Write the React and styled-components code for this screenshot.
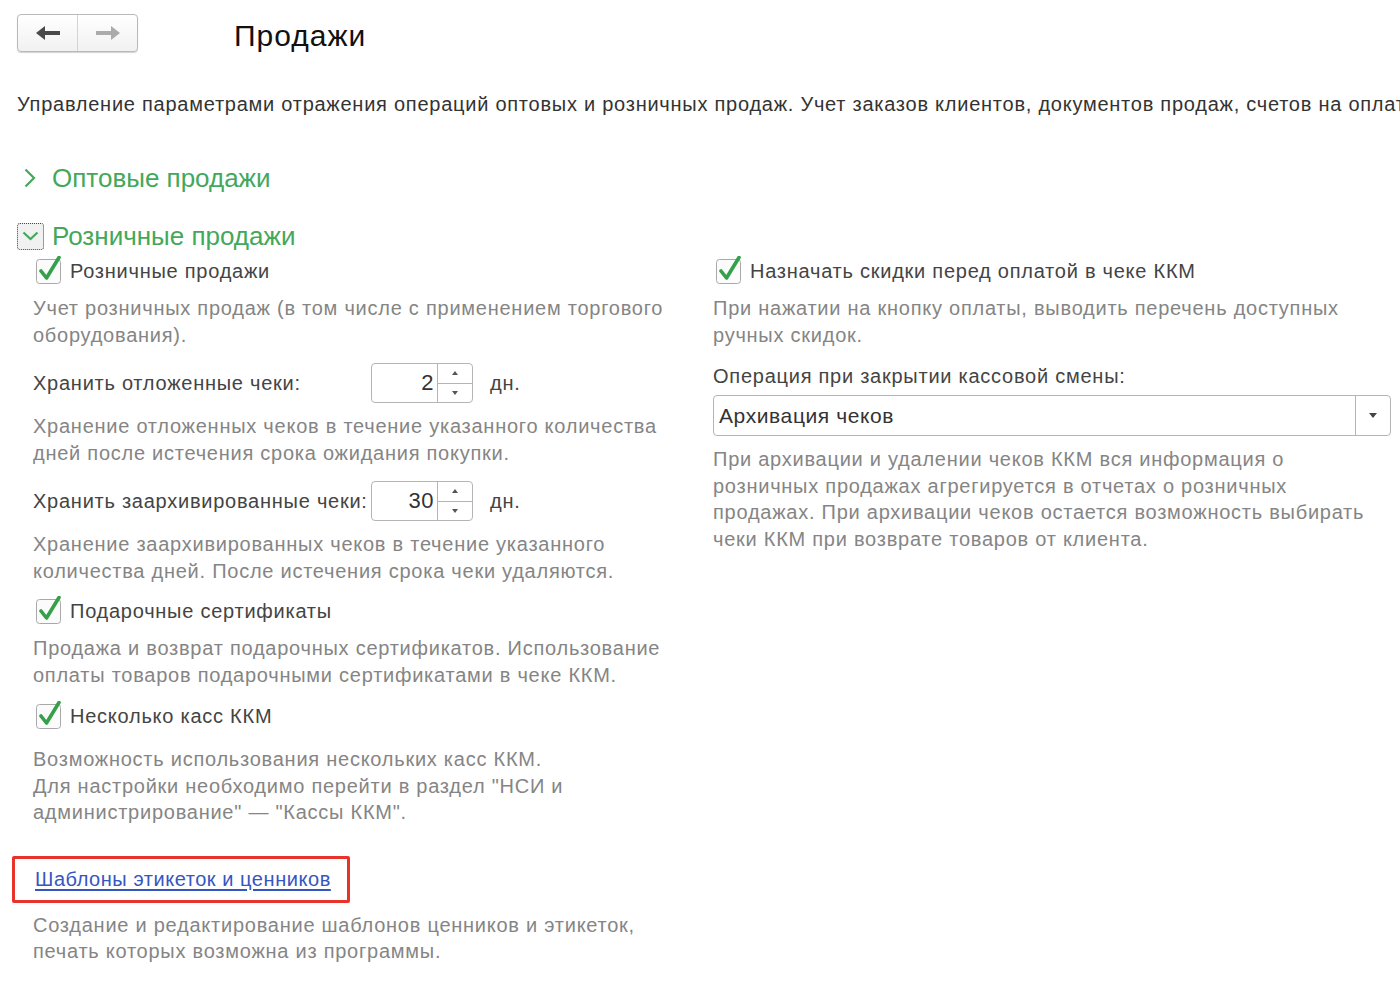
import styled, { createGlobalStyle } from "styled-components";

const Global = createGlobalStyle`
  html, body { margin: 0; padding: 0; background: #fff; }
  body {
    font-family: "Liberation Sans", Arial, sans-serif;
    color: #333;
    overflow: hidden;
  }
`;

const Page = styled.div`
  width: 1400px;
  height: 982px;
  overflow: hidden;
  padding: 14px 0 0 17px;
  box-sizing: border-box;
  letter-spacing: 0.75px;
`;

const Header = styled.div`
  display: flex;
  align-items: flex-start;
`;

const NavGroup = styled.div`
  display: flex;
  width: 121px;
  height: 38px;
  box-sizing: border-box;
  border: 1px solid #b9b9b9;
  border-radius: 4px;
  background: linear-gradient(#ffffff, #f1f1f1);
  box-shadow: 0 1px 1px rgba(0, 0, 0, 0.18);
`;

const NavButton = styled.div`
  flex: 1;
  display: flex;
  align-items: center;
  justify-content: center;
  & + & { border-left: 1px solid #d4d4d4; }
`;

const Title = styled.h1`
  margin: 4px 0 0 96px;
  font-size: 30px;
  line-height: 36px;
  font-weight: normal;
  letter-spacing: 1px;
  color: #111;
`;

const Intro = styled.div`
  margin-top: 37px;
  font-size: 20px;
  line-height: 26px;
  color: #333;
  white-space: nowrap;
`;

const GroupTitle = styled.div`
  display: flex;
  align-items: center;
  gap: ${(p) => p.$gap || 16}px;
  margin-top: ${(p) => p.$top}px;
  padding-left: ${(p) => p.$pad || 0}px;
  font-size: 26px;
  line-height: 32px;
  letter-spacing: 0;
  color: #43a85b;
`;

const CollapseBox = styled.div`
  width: 27px;
  height: 27px;
  box-sizing: border-box;
  border: 1px dotted #444;
  border-radius: 3px;
  background: #f1f1f1;
  display: flex;
  align-items: center;
  justify-content: center;
`;

const Columns = styled.div`
  display: grid;
  grid-template-columns: 680px 678px;
  margin-top: 6px;
  padding-left: 16px;
`;

const Column = styled.div`
  display: flex;
  flex-direction: column;
`;

const CheckRow = styled.div`
  display: flex;
  align-items: center;
  gap: 7px;
  height: 26px;
  margin-top: ${(p) => p.$top || 0}px;
  padding-left: 3px;
  font-size: 20px;
  color: #444;
`;

const Desc = styled.div`
  margin-top: ${(p) => p.$top || 0}px;
  font-size: 20px;
  line-height: 26.5px;
  color: #858585;
  max-width: ${(p) => p.$w || 665}px;
`;

const FieldRow = styled.div`
  display: flex;
  align-items: center;
  height: 40px;
  margin-top: ${(p) => p.$top || 0}px;
  font-size: 20px;
  color: #444;
`;

const FieldLabel = styled.div`
  width: 338px;
`;

const NumberBox = styled.div`
  display: flex;
  width: 102px;
  height: 40px;
  box-sizing: border-box;
  border: 1px solid #b5b5b5;
  border-radius: 4px;
  background: #fff;
`;

const NumberValue = styled.div`
  flex: 1;
  text-align: right;
  padding-right: 3px;
  font-size: 22px;
  line-height: 38px;
  letter-spacing: 0.5px;
  color: #333;
`;

const Spinner = styled.div`
  width: 34px;
  border-left: 1px solid #b5b5b5;
  display: flex;
  flex-direction: column;
`;

const SpinHalf = styled.div`
  flex: 1;
  display: flex;
  align-items: center;
  justify-content: center;
  & + & { border-top: 1px solid #b5b5b5; }
`;

const Unit = styled.span`
  margin-left: 17px;
`;

const Label = styled.div`
  margin-top: ${(p) => p.$top || 0}px;
  font-size: 20px;
  line-height: 26px;
  color: #444;
`;

const Select = styled.div`
  display: flex;
  margin-top: 6px;
  height: 41px;
  box-sizing: border-box;
  border: 1px solid #b5b5b5;
  border-radius: 4px;
  background: #fff;
`;

const SelectValue = styled.div`
  flex: 1;
  padding-left: 5px;
  font-size: 21px;
  line-height: 39px;
  letter-spacing: 0.6px;
  color: #333;
`;

const SelectButton = styled.div`
  width: 34px;
  border-left: 1px solid #b5b5b5;
  display: flex;
  align-items: center;
  justify-content: center;
`;

const LinkFrame = styled.div`
  align-self: flex-start;
  margin: 30px 0 0 -21px;
  width: 338px;
  height: 47px;
  box-sizing: border-box;
  border: 3px solid #e8332a;
  border-radius: 2px;
  padding: 8px 0 0 20px;
`;

const Link = styled.a`
  font-size: 20px;
  line-height: 25px;
  letter-spacing: 0.55px;
  color: #3556c0;
  text-decoration: underline;
  text-underline-offset: 3px;
  cursor: pointer;
`;

const Arrow = ({ dir, color }) => (
  <svg width="24" height="14" viewBox="0 0 24 14">
    <g transform={dir === "right" ? "translate(24 0) scale(-1 1)" : undefined} fill={color}>
      <polygon points="0,7 9,0 9,14" />
      <rect x="8" y="5" width="16" height="4" />
    </g>
  </svg>
);

const Checkbox = () => (
  <svg width="27" height="28" viewBox="0 0 27 28" style={{ marginTop: -2 }}>
    <rect x="0.5" y="3.5" width="24" height="24" rx="3" fill="#fbfbfb" stroke="#a9a9a9" />
    <path d="M5 15 L10.5 22 L23 1.5" fill="none" stroke="#34a04a" strokeWidth="3.6" strokeLinejoin="round" strokeLinecap="round" />
  </svg>
);

const SpinTriangle = ({ up }) => (
  <svg width="6" height="4" viewBox="0 0 6 4">
    <polygon points={up ? "3,0 6,4 0,4" : "0,0 6,0 3,4"} fill="#555" />
  </svg>
);

const NumberField = ({ value }) => (
  <NumberBox>
    <NumberValue>{value}</NumberValue>
    <Spinner>
      <SpinHalf><SpinTriangle up /></SpinHalf>
      <SpinHalf><SpinTriangle /></SpinHalf>
    </Spinner>
  </NumberBox>
);

export default function App() {
  return (
    <Page>
      <Global />
      <Header>
        <NavGroup>
          <NavButton><Arrow dir="left" color="#4a4a4a" /></NavButton>
          <NavButton><Arrow dir="right" color="#ababab" /></NavButton>
        </NavGroup>
        <Title>Продажи</Title>
      </Header>

      <Intro>
        Управление параметрами отражения операций оптовых и розничных продаж. Учет заказов клиентов, документов продаж, счетов на оплату
      </Intro>

      <GroupTitle $top={45} $pad={7} $gap={16}>
        <svg width="12" height="20" viewBox="0 0 12 20">
          <path d="M1.5 1.5 L10 10 L1.5 18.5" fill="none" stroke="#43a85b" strokeWidth="2.2" />
        </svg>
        Оптовые продажи
      </GroupTitle>

      <GroupTitle $top={26} $gap={8}>
        <CollapseBox>
          <svg width="17" height="10" viewBox="0 0 17 10">
            <path d="M1.5 1.5 L8.5 8 L15.5 1.5" fill="none" stroke="#43a85b" strokeWidth="2.2" />
          </svg>
        </CollapseBox>
        Розничные продажи
      </GroupTitle>

      <Columns>
        <Column>
          <CheckRow><Checkbox />Розничные продажи</CheckRow>
          <Desc $top={11}>
            Учет розничных продаж (в том числе с применением торгового оборудования).
          </Desc>

          <FieldRow $top={15}>
            <FieldLabel>Хранить отложенные чеки:</FieldLabel>
            <NumberField value="2" />
            <Unit>дн.</Unit>
          </FieldRow>
          <Desc $top={10}>
            Хранение отложенных чеков в течение указанного количества дней после истечения срока ожидания покупки.
          </Desc>

          <FieldRow $top={15}>
            <FieldLabel>Хранить заархивированные чеки:</FieldLabel>
            <NumberField value="30" />
            <Unit>дн.</Unit>
          </FieldRow>
          <Desc $top={10}>
            Хранение заархивированных чеков в течение указанного количества дней. После истечения срока чеки удаляются.
          </Desc>

          <CheckRow $top={14}><Checkbox />Подарочные сертификаты</CheckRow>
          <Desc $top={11}>
            Продажа и возврат подарочных сертификатов. Использование оплаты товаров подарочными сертификатами в чеке ККМ.
          </Desc>

          <CheckRow $top={15}><Checkbox />Несколько касс ККМ</CheckRow>
          <Desc $top={17}>
            Возможность использования нескольких касс ККМ.
            <br />
            Для настройки необходимо перейти в раздел "НСИ и администрирование" — "Кассы ККМ".
          </Desc>

          <LinkFrame>
            <Link>Шаблоны этикеток и ценников</Link>
          </LinkFrame>
          <Desc $top={9}>
            Создание и редактирование шаблонов ценников и этикеток, печать которых возможна из программы.
          </Desc>
        </Column>

        <Column>
          <CheckRow><Checkbox />Назначать скидки перед оплатой в чеке ККМ</CheckRow>
          <Desc $top={11} $w={660}>
            При нажатии на кнопку оплаты, выводить перечень доступных ручных скидок.
          </Desc>

          <Label $top={15}>Операция при закрытии кассовой смены:</Label>
          <Select>
            <SelectValue>Архивация чеков</SelectValue>
            <SelectButton>
              <svg width="8" height="5" viewBox="0 0 8 5">
                <polygon points="0,0 8,0 4,5" fill="#444" />
              </svg>
            </SelectButton>
          </Select>
          <Desc $top={10} $w={660}>
            При архивации и удалении чеков ККМ вся информация о розничных продажах агрегируется в отчетах о розничных продажах. При архивации чеков остается возможность выбирать чеки ККМ при возврате товаров от клиента.
          </Desc>
        </Column>
      </Columns>
    </Page>
  );
}
